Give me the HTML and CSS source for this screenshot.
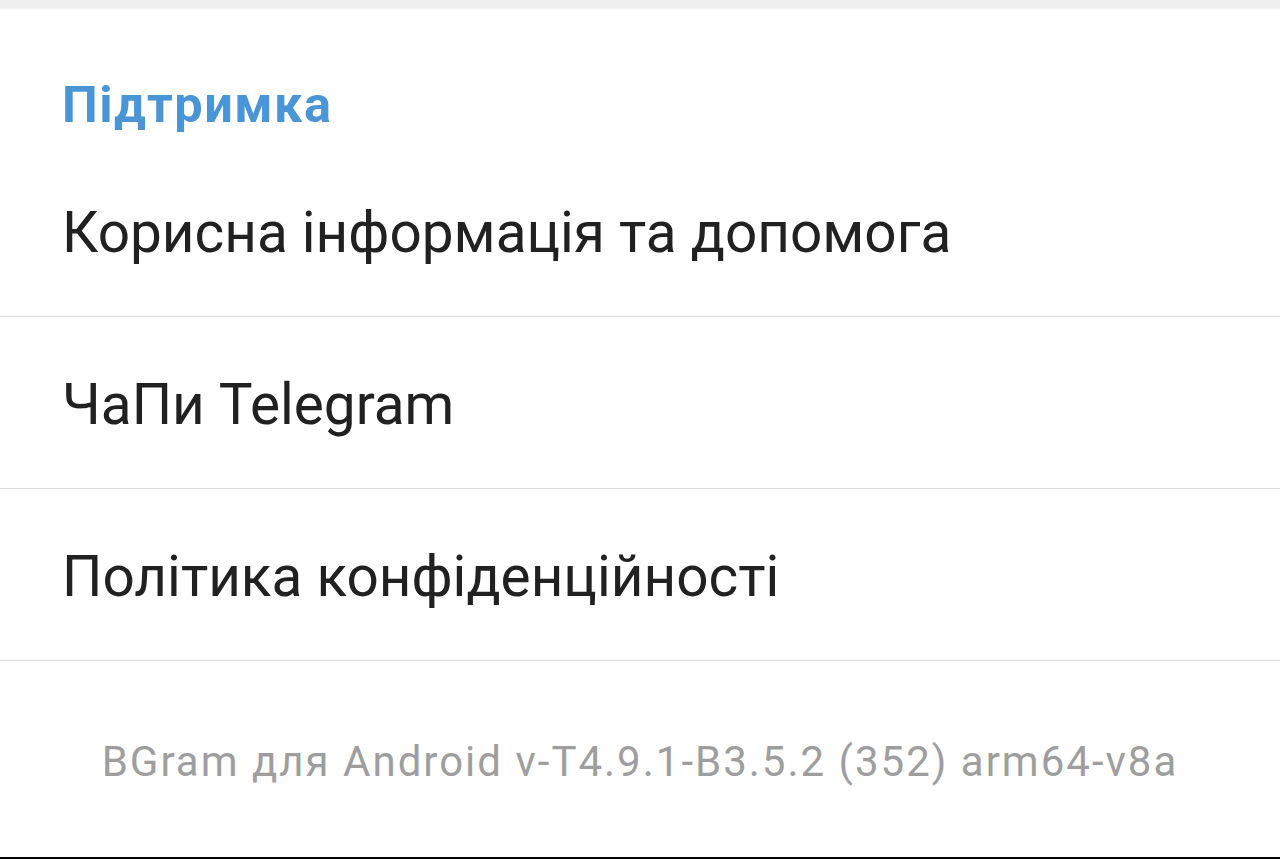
FILE: index.html
```html
<!DOCTYPE html>
<html lang="uk">

<head>
    <meta charset="UTF-8">
    <meta name="viewport" content="width=device-width, initial-scale=1.0">
    <title>Підтримка</title>
    <link rel="stylesheet" href="styles.css">
</head>

<body>
    <div class="shadow"></div>
    <div class="section">
        <h2 class="title">Підтримка</h2>
        <ul class="list">
            <li><a href="">Корисна інформація та допомога</a></li>
            <li><a href="">ЧаПи Telegram</a></li>
            <li><a href="">Політика конфіденційності</a></li>
        </ul>
    </div>
    <div class="version">BGram для Android v-T4.9.1-B3.5.2 (352) arm64-v8a</div>
    <div class="bottom"></div>
</body>

</html>
```

FILE: styles.css
```css
body,
h2,
ul,
li {
    margin: 0;
    padding: 0;
    font-weight: normal;
    list-style: none;
}

body {
    background: #fff;
    font-family: Roboto, "Noto Sans", sans-serif;
    height: 859px;
    overflow: hidden;
}

a {
    color: #212121;
    text-decoration: none;
}

.shadow {
    height: 9px;
    background: #efefef;
}

.title {
    padding: 71px 62px 15px;
    font-size: 50.5px;
    line-height: 50px;
    font-weight: 700;
    letter-spacing: 1.5px;
    color: #4a95d6;
}

.list li {
    border-bottom: 1px solid #dcdcdc;
}

.list a {
    display: block;
    padding: 6px 62px 2px;
    font-size: 56.7px;
    line-height: 163px;
}

.version {
    height: 120px;
    padding-top: 76px;
    font-size: 42px;
    line-height: 49px;
    letter-spacing: 2px;
    text-align: center;
    color: #9e9e9e;
}

.bottom {
    height: 2px;
    background: #000;
}
```
